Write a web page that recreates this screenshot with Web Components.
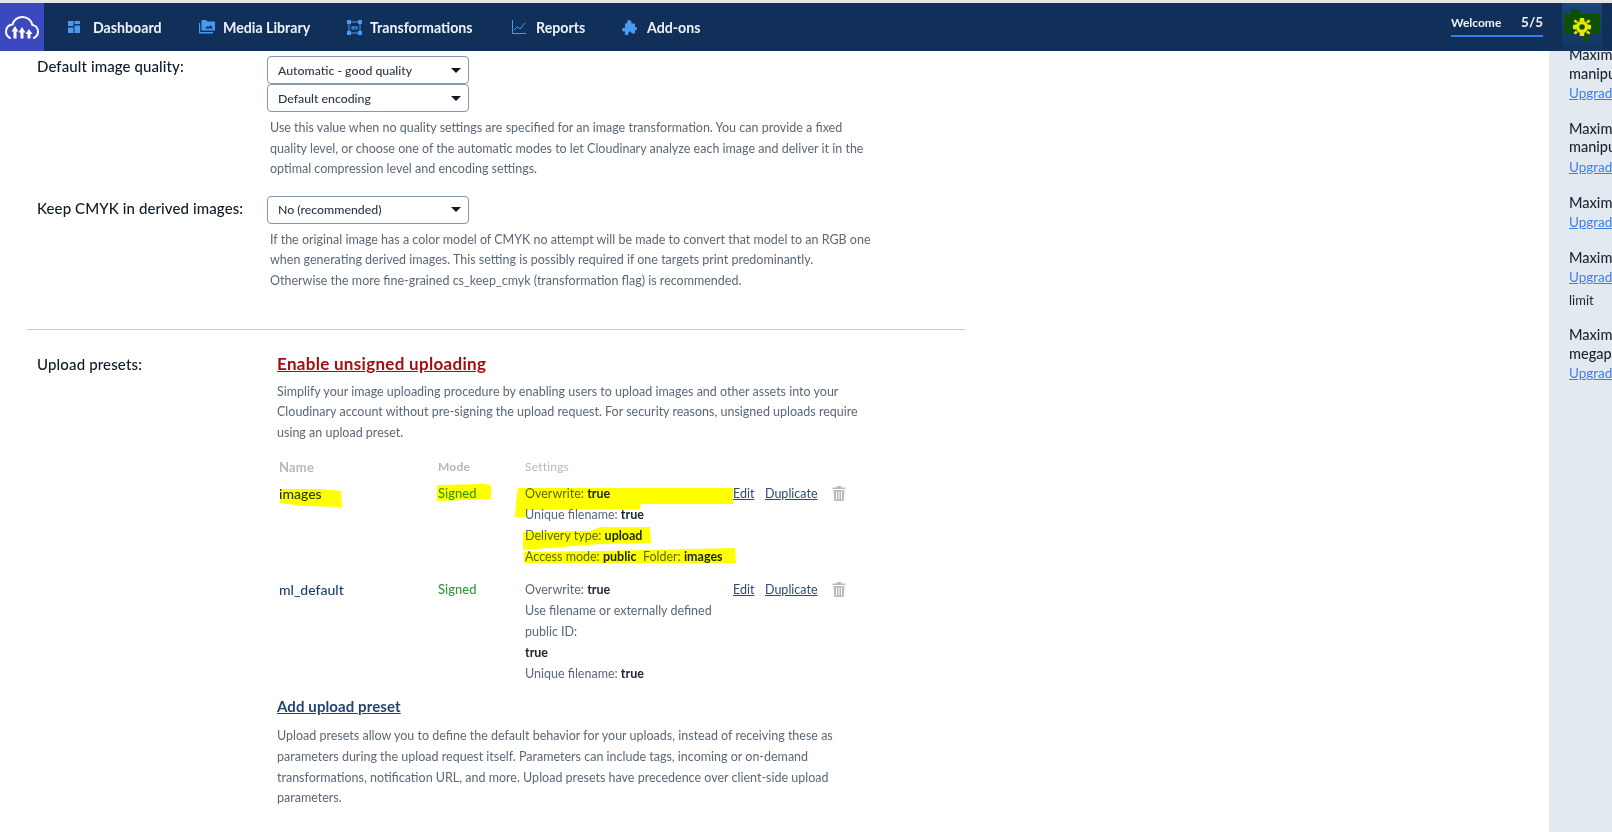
<!DOCTYPE html>
<html lang="en">
<head>
<meta charset="utf-8">
<title>Upload settings</title>
<style>
  html, body { margin: 0; padding: 0; height: 100%; overflow: hidden; background: #fff; }
  body { font-family: Lato, "Noto Sans", sans-serif; }
</style>
</head>
<body>
<app-shell>
  <top-nav slot="nav"></top-nav>
  <settings-form slot="main">
    <settings-row label="Default image quality:">
      <select-box>Automatic - good quality</select-box>
      <select-box>Default encoding</select-box>
      <help-text>Use this value when no quality settings are specified for an image transformation. You can provide a fixed<br>quality level, or choose one of the automatic modes to let Cloudinary analyze each image and deliver it in the<br>optimal compression level and encoding settings.</help-text>
    </settings-row>
    <settings-row label="Keep CMYK in derived images:" style="margin-top:16px;--label-top:2px">
      <select-box>No (recommended)</select-box>
      <help-text>If the original image has a color model of CMYK no attempt will be made to convert that model to an RGB one<br>when generating derived images. This setting is possibly required if one targets print predominantly.<br>Otherwise the more fine-grained cs_keep_cmyk (transformation flag) is recommended.</help-text>
    </settings-row>
    <upload-presets></upload-presets>
  </settings-form>
  <side-panel slot="side">
    <limit-item upgrade>Maximum image<br>manipulations</limit-item>
    <limit-item upgrade>Maximum video<br>manipulations</limit-item>
    <limit-item upgrade>Maximum image size</limit-item>
    <limit-item upgrade note="limit">Maximum video size</limit-item>
    <limit-item upgrade>Maximum image<br>megapixels</limit-item>
  </side-panel>
</app-shell>

<script>
class AppShell extends HTMLElement {
  constructor() {
    super();
    this.shadowDOM = this.attachShadow({mode: 'open'});
    this.shadowDOM.innerHTML = `
    <style>
      :host {
        display: flex;
        flex-direction: column;
        height: 832px;
        overflow: hidden;
        background: #fff;
      }
      .strip { height: 3px; background: #e6e6e6; flex: none; }
      .body { display: flex; flex: 1; min-height: 0; }
      .main { flex: 1; min-width: 0; overflow: hidden; }
    </style>
    <div class="strip"></div>
    <slot name="nav"></slot>
    <div class="body">
      <div class="main"><slot name="main"></slot></div>
      <slot name="side"></slot>
    </div>
    `;
  }
}

class TopNav extends HTMLElement {
  constructor() {
    super();
    this.shadowDOM = this.attachShadow({mode: 'open'});
    this.shadowDOM.innerHTML = `
    <style>
      :host {
        display: flex;
        align-items: stretch;
        height: 48px;
        flex: none;
        background: #10305a;
        color: #eef2f7;
        font: 700 14.200px Lato, "Noto Sans", sans-serif;
        position: relative;
      }
      .logo {
        width: 44px;
        background: #3b48c0;
        display: flex;
        align-items: center;
        justify-content: center;
        flex: none;
      }
      nav { display: flex; align-items: center; margin-left: 24px; }
      .item { display: flex; align-items: center; }
      .item svg { flex: none; display: block; }
      .item span { white-space: nowrap; }
      .spacer { flex: 1; }
      .welcome {
        width: 92px;
        height: 33px;
        margin-top: 1px;
        padding-top: 5px;
        box-sizing: border-box;
        border-bottom: 2px solid #2f80ed;
        display: flex;
        justify-content: space-between;
        align-items: center;
        font-size: 12px;
        font-weight: 700;
      }
      .welcome b { font-size: 13.500px; font-weight: 700; }
      .gear {
        width: 40px;
        margin: 0 10px 0 19px;
        background: linear-gradient(#1a4679, #12355f);
      }
      .gear svg { display: block; }
    </style>
    <div class="logo">
      <svg width="34" height="23" viewBox="0 0 34 23" fill="none">
        <path d="M5 22C2 20.500 1 18 1 15.500 1 11.500 4 8.500 7.500 8.500 9 4 13 1 17.500 1 22.500 1 26.500 4.500 27.500 9 31 9.500 33 12.500 33 15.500 33 18 32 20.500 29 22" stroke="#fff" stroke-width="2" stroke-linecap="round"/>
        <path fill="#fff" d="M8.500 22.500V15.500H6.500L10 10 13.500 15.500H11.500V22.500ZM15.500 22.500V16.500H13.500L17 11 20.500 16.500H18.500V22.500ZM22.500 22.500V18H20.500L24 13 27.500 18H25.500V22.500Z"/>
      </svg>
    </div>
    <nav>
      <div class="item" style="width:131px">
        <svg width="12" height="12" viewBox="0 0 12 12" fill="#4a9bf0" style="margin-right:13px"><rect width="5.500" height="5"/><rect y="6.500" width="5.500" height="5.500"/><rect x="6.500" width="5.500" height="3"/><rect x="6.500" y="4.500" width="5.500" height="7.500"/></svg>
        <span>Dashboard</span>
      </div>
      <div class="item" style="width:148px">
        <svg width="16" height="14" viewBox="0 0 16 14" fill="#4a9bf0" style="margin-right:8px"><path d="M2.500 0H7l1.500 1.500H16V10.500H2.500ZM6 8.500H14L11.500 5 9.700 7 8.500 6ZM0 3H1.200V12H14V13.500H0Z" fill-rule="evenodd"/></svg>
        <span>Media Library</span>
      </div>
      <div class="item" style="width:165px">
        <svg width="15" height="15" viewBox="0 0 15 15" fill="none" stroke="#4a9bf0" style="margin-right:8px"><rect x="2" y="2" width="11" height="11"/><g fill="#4a9bf0" stroke="none"><rect width="4" height="4"/><rect x="11" width="4" height="4"/><rect y="11" width="4" height="4"/><rect x="11" y="11" width="4" height="4"/><path d="M4.500 9.500h6V6.500h-6ZM5.200 8.800h4.600l-1.500-1.600-1 1-.6-.5Z" fill-rule="evenodd"/></g></svg>
        <span>Transformations</span>
      </div>
      <div class="item" style="width:110px">
        <svg width="14" height="14" viewBox="0 0 14 14" fill="none" stroke="#4a9bf0" stroke-width="1" style="margin-right:10px"><path d="M.5 0V13.500H14"/><path d="M2 10.500 5.500 6.500 8 9l5-6"/></svg>
        <span>Reports</span>
      </div>
      <div class="item">
        <svg width="15" height="15" viewBox="0 0 15 15" fill="#4a9bf0" style="margin-right:10px"><path d="M5 2.500C5 1 6 0 7.200 0S9.500 1 9.500 2.500V3.500H13V7h1c.7 0 1 .8 1 1.600S14.500 10.200 14 10.200H13V13.500H9.500C9.700 12.500 9 11.500 8 11.500S6 12.500 6.200 15H3V11.500C2 11.800 0 11.500 0 9.700S2 7.500 3 7.800V3.500H5Z"/></svg>
        <span>Add-ons</span>
      </div>
    </nav>
    <div class="spacer"></div>
    <div class="welcome"><span>Welcome</span><b>5/5</b></div>
    <div class="gear">
      <svg width="40" height="48" viewBox="0 0 40 48">
        <path fill="#0c5000" d="M2 11H9V6H18V11H38V30H27V38H21V30H2Z"/>
        <g fill="#e8e800">
          <circle cx="20" cy="24" r="6.200"/>
          <path d="M18 15h4l.6 3h-5.200ZM18 33h4l.6-3h-5.200ZM11 22v4l3 .6v-5.200ZM29 22v4l-3 .6v-5.200ZM13.200 16.400l2.800 2.100-2 2-2.400-2.500ZM26.800 16.400l-2.800 2.100 2 2 2.400-2.500ZM13.200 31.600l2.800-2.100-2-2-2.400 2.500ZM26.800 31.600l-2.800-2.100 2-2 2.400 2.500Z"/>
        </g>
        <circle cx="20" cy="24" r="2.800" fill="#0c5000"/>
      </svg>
    </div>
    `;
  }
}

class SettingsForm extends HTMLElement {
  constructor() {
    super();
    this.shadowDOM = this.attachShadow({mode: 'open'});
    this.shadowDOM.innerHTML = `
    <style>
      :host {
        display: block;
        width: 938px;
        margin-left: 27px;
        padding-top: 5px;
      }
    </style>
    <slot></slot>
    `;
  }
}

class SettingsRow extends HTMLElement {
  constructor() {
    super();
    this.shadowDOM = this.attachShadow({mode: 'open'});
    this.shadowDOM.innerHTML = `
    <style>
      :host {
        display: grid;
        grid-template-columns: 230px 1fr;
        padding-left: 10px;
      }
      .label {
        margin-top: var(--label-top, 0);
        font: 500 15px/20px Lato, "Noto Sans", sans-serif;
        color: #0d1a28;
        letter-spacing: .1px;
      }
    </style>
    <div class="label">${this.getAttribute('label')}</div>
    <div><slot></slot></div>
    `;
  }
}

class SelectBox extends HTMLElement {
  constructor() {
    super();
    this.shadowDOM = this.attachShadow({mode: 'open'});
    this.shadowDOM.innerHTML = `
    <style>
      :host {
        display: flex;
        align-items: center;
        justify-content: space-between;
        box-sizing: border-box;
        width: 202px;
        height: 28px;
        padding: 0 7px 0 10px;
        border: 1px solid #8497ad;
        border-radius: 4px;
        font: 500 12.300px Lato, "Noto Sans", sans-serif;
        color: #2b3646;
        background: #fff;
      }
      .arrow {
        width: 0;
        height: 0;
        border-left: 5.500px solid transparent;
        border-right: 5.500px solid transparent;
        border-top: 5.500px solid #10182a;
      }
    </style>
    <span><slot></slot></span>
    <i class="arrow"></i>
    `;
  }
}

class HelpText extends HTMLElement {
  constructor() {
    super();
    this.shadowDOM = this.attachShadow({mode: 'open'});
    this.shadowDOM.innerHTML = `
    <style>
      :host {
        display: block;
        margin: 6px 0 0 3px;
        font: 400 12.500px/20.600px Lato, "Noto Sans", sans-serif;
        color: #5b6878;
        white-space: nowrap;
      }
    </style>
    <slot></slot>
    `;
  }
}

class UploadPresets extends HTMLElement {
  constructor() {
    super();
    this.shadowDOM = this.attachShadow({mode: 'open'});
    const trash = `<svg width="14" height="15" viewBox="0 0 14 15" fill="#b9bcbf"><path d="M5 0H9L9.500 1.500H13.500V3H.5V1.500H4.500ZM1.500 4H12.500L11.700 15H2.300ZM4 5.500V13.500H5V5.500ZM6.500 5.500V13.500H7.500V5.500ZM9 5.500V13.500H10V5.500Z" fill-rule="evenodd"/></svg>`;
    this.shadowDOM.innerHTML = `
    <style>
      :host {
        margin-top: 37px;
        border-top: 1px solid #c9ccd0;
        padding-left: 10px;
        display: grid;
        grid-template-columns: 240px 1fr;
        font: 400 12.500px/20.600px Lato, "Noto Sans", sans-serif;
        color: #5b6878;
        white-space: nowrap;
      }
      .label {
        font: 500 15px/24px Lato, "Noto Sans", sans-serif;
        letter-spacing: .15px;
        color: #0d1a28;
        margin-top: 22px;
      }
      .body { position: relative; }
      h3 {
        margin: 22px 0 6px;
        font: 700 17px/24px Lato, "Noto Sans", sans-serif;
        letter-spacing: .3px;
        text-decoration: underline;
        color: #a50e0e;
      }
      h3.add { margin: 10px 0 8px; color: #1f4470; font-size: 15px; letter-spacing: .1px; }
      .table {
        margin-top: 14px;
        display: grid;
        grid-template-columns: 159px 87px 208px 32px 67px 14px;
        margin-left: 2px;
        row-gap: 12px;
      }
      .table > div { line-height: 21px; }
      .table > .head { font-size: 12px; color: #b4b8bd; line-height: 20px; letter-spacing: .2px; margin-bottom: -6px; }
      .table > .head.name { font-size: 13px; font-weight: 700; }
      .table > .head.mode { font-weight: 700; }
      .pname { font-size: 14px; font-weight: 500; color: #1d3f6b; }
      .signed { font-size: 13px; color: #2d9a3e; font-weight: 500; }
      .lines b { font-weight: 700; color: #1a2531; }
      a { color: #2a4d78; text-decoration: underline; }
      .trash { padding-top: 3px; }
      .trash svg { display: block; }
      .marks {
        position: absolute;
        left: -277px;
        top: -330px;
        width: 800px;
        height: 700px;
        pointer-events: none;
        mix-blend-mode: multiply;
      }
    </style>
    <div class="label">Upload presets:</div>
    <div class="body">
      <h3>Enable unsigned uploading</h3>
      Simplify your image uploading procedure by enabling users to upload images and other assets into your<br>
      Cloudinary account without pre-signing the upload request. For security reasons, unsigned uploads require<br>
      using an upload preset.
      <div class="table">
        <div class="head name">Name</div><div class="head mode">Mode</div><div class="head">Settings</div><div class="head"></div><div class="head"></div><div class="head"></div>
        <div class="pname">images</div>
        <div class="signed">Signed</div>
        <div class="lines">Overwrite: <b>true</b><br>Unique filename: <b>true</b><br>Delivery type: <b>upload</b><br>Access mode: <b>public</b>&nbsp; Folder: <b>images</b></div>
        <div><a href="#">Edit</a></div><div><a href="#">Duplicate</a></div><div class="trash">${trash}</div>
        <div class="pname">ml_default</div>
        <div class="signed">Signed</div>
        <div class="lines">Overwrite: <b>true</b><br>Use filename or externally defined<br>public ID:<br><b>true</b><br>Unique filename: <b>true</b></div>
        <div><a href="#">Edit</a></div><div><a href="#">Duplicate</a></div><div class="trash">${trash}</div>
      </div>
      <h3 class="add">Add upload preset</h3>
      Upload presets allow you to define the default behavior for your uploads, instead of receiving these as<br>
      parameters during the upload request itself. Parameters can include tags, incoming or on-demand<br>
      transformations, notification URL, and more. Upload presets have precedence over client-side upload<br>
      parameters.
      <svg class="marks" viewBox="0 0 800 700" fill="#ffff00">
        <path d="M280 489H320L341 491 342 507 305 506 280 503Z"/>
        <path d="M437 485 483 484 491 485V499L437 501Z"/>
        <path d="M518 488H733V504H641L640 509 527 510 526 517 515 517 516 502Z"/>
        <path d="M523 532 590 531 600 527 650 527 651 543 600 544 523 550Z"/>
        <path d="M524 552 600 551 735 548 736 563 524 563Z"/>
      </svg>
    </div>
    `;
  }
}

class SidePanel extends HTMLElement {
  constructor() {
    super();
    this.shadowDOM = this.attachShadow({mode: 'open'});
    this.shadowDOM.innerHTML = `
    <style>
      :host {
        display: block;
        width: 63px;
        flex: none;
        background: #e3e9f0;
        overflow: hidden;
      }
      .inner {
        margin-top: -5px;
        padding-left: 20px;
        display: flex;
        flex-direction: column;
        gap: 15.300px;
        white-space: nowrap;
      }
    </style>
    <div class="inner"><slot></slot></div>
    `;
  }
}

class LimitItem extends HTMLElement {
  constructor() {
    super();
    this.shadowDOM = this.attachShadow({mode: 'open'});
    const note = this.getAttribute('note');
    this.shadowDOM.innerHTML = `
    <style>
      :host {
        display: block;
        font: 400 13px/22px Lato, "Noto Sans", sans-serif;
        color: #1a2531;
      }
      .title { font: 500 14.500px/18.500px Lato, "Noto Sans", sans-serif; }
      a { color: #3f7fe8; text-decoration: underline; display: block; font-size: 13.500px; line-height: 21.500px; }
    </style>
    <div class="title"><slot></slot></div>
    <a href="#">Upgrade plan</a>
    ${note ? `<div class="note">${note}</div>` : ''}
    `;
  }
}

customElements.define('app-shell', AppShell);
customElements.define('top-nav', TopNav);
customElements.define('settings-form', SettingsForm);
customElements.define('settings-row', SettingsRow);
customElements.define('select-box', SelectBox);
customElements.define('help-text', HelpText);
customElements.define('upload-presets', UploadPresets);
customElements.define('side-panel', SidePanel);
customElements.define('limit-item', LimitItem);
</script>
</body>
</html>
